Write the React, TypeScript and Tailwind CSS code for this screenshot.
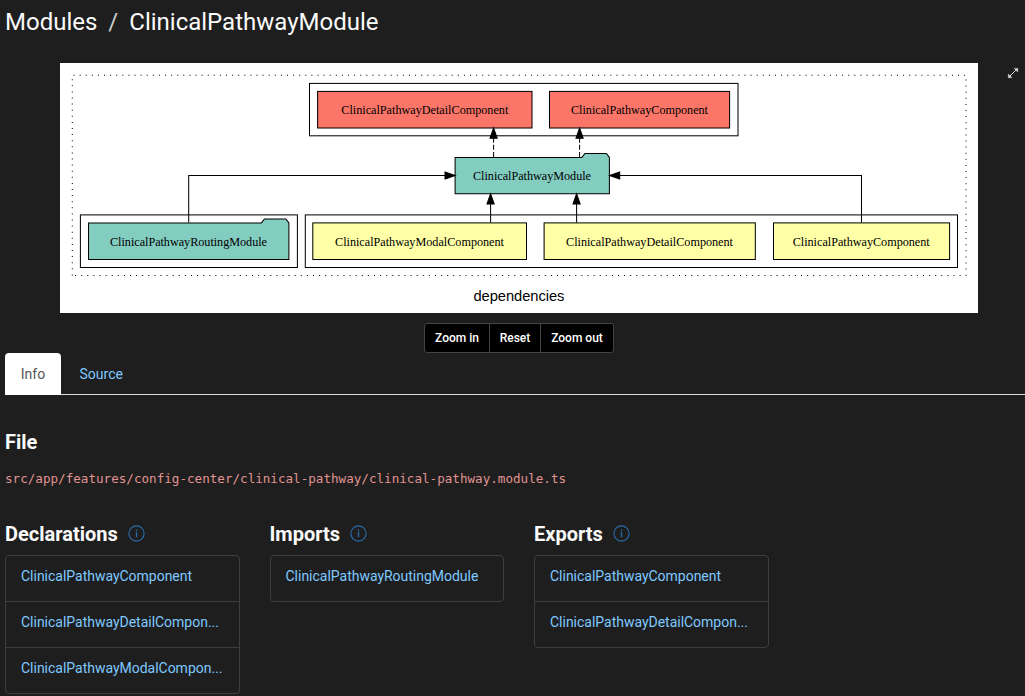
import React from 'react';

type Box = { x1: number; x2: number; y1: number; y2: number };

const clusters: Box[] = [
  { x1: 309.5, x2: 738, y1: 83.4, y2: 135.8 },
  { x1: 80.4, x2: 297.4, y1: 214.9, y2: 267.5 },
  { x1: 305.3, x2: 957.5, y1: 214.9, y2: 267.5 },
];

type Node = Box & { label: string; fill: string; tx: number; tw: number };

const nodes: Node[] = [
  { label: 'ClinicalPathwayDetailComponent', fill: '#fb7669', x1: 317.6, x2: 532, y1: 91.4, y2: 128, tx: 341.3, tw: 167 },
  { label: 'ClinicalPathwayComponent', fill: '#fb7669', x1: 549.5, x2: 729.6, y1: 91.4, y2: 128, tx: 571, tw: 137 },
  { label: 'ClinicalPathwayModalComponent', fill: '#ffffa8', x1: 312.8, x2: 526.5, y1: 222.9, y2: 259.5, tx: 335, tw: 169 },
  { label: 'ClinicalPathwayDetailComponent', fill: '#ffffa8', x1: 544.1, x2: 755.3, y1: 222.9, y2: 259.5, tx: 566, tw: 167 },
  { label: 'ClinicalPathwayComponent', fill: '#ffffa8', x1: 773.5, x2: 949.6, y1: 222.9, y2: 259.5, tx: 792.7, tw: 137 },
];

const folders: Node[] = [
  { label: 'ClinicalPathwayModule', fill: '#82cdc0', x1: 455.1, x2: 609.4, y1: 157.4, y2: 193.7, tx: 473, tw: 118 },
  { label: 'ClinicalPathwayRoutingModule', fill: '#82cdc0', x1: 88.5, x2: 288.9, y1: 222.9, y2: 259.5, tx: 110, tw: 157 },
];

function Label({ n }: { n: Node }) {
  return (
    <text x={n.tx} y={n.y1 + 22.8} textLength={n.tw} stroke="none" fill="#000" fontSize="12.2" className="font-['Liberation_Serif',serif]">
      {n.label}
    </text>
  );
}

function Graph() {
  return (
    <svg viewBox="60 63 918 250" width="918" height="250" className="block bg-white" stroke="#000" strokeWidth="1.02" fill="none">
      <path d="M72.3 275.4V75.3H966V275.4Z" strokeDasharray="1.02 5.08" />
      {clusters.map((c) => (
        <rect key={c.x1} x={c.x1} y={c.y1} width={c.x2 - c.x1} height={c.y2 - c.y1} />
      ))}
      {nodes.map((n) => (
        <g key={n.x1}>
          <rect x={n.x1} y={n.y1} width={n.x2 - n.x1} height={n.y2 - n.y1} fill={n.fill} />
          <Label n={n} />
        </g>
      ))}
      {folders.map((n) => (
        <g key={n.x1}>
          <path
            fill={n.fill}
            d={`M${n.x2} ${n.y1}L${n.x2 - 3} ${n.y1 - 4}H${n.x2 - 24.5}L${n.x2 - 27.5} ${n.y1}H${n.x1}V${n.y2}H${n.x2}Z`}
          />
          <Label n={n} />
        </g>
      ))}
      <path d="M188.7 222.5V175.5H445M861.5 222.5V175.5H620M490.6 222.5V204M576.6 222.5V204" />
      <path d="M493.6 157V138M579.6 157V138" strokeDasharray="5.1 2.04" />
      <g fill="#000">
        <path d="M445 171.9L455.2 175.5L445 179.1ZM619.7 171.9L609.5 175.5L619.7 179.1Z" />
        <path d="M487 204L490.6 193.8L494.2 204ZM573 204L576.6 193.8L580.2 204Z" />
        <path d="M490 138.2L493.6 128L497.2 138.2ZM576 138.2L579.6 128L583.2 138.2Z" />
      </g>
      <text x="473.4" y="301" textLength="91" stroke="none" fill="#000" fontSize="14.7" className="font-['Liberation_Sans',sans-serif]">
        dependencies
      </text>
    </svg>
  );
}

function InfoIcon() {
  return (
    <svg width="17" height="17" viewBox="0 0 17 17" fill="none" stroke="#2a6cab" strokeWidth="1.1" className="relative -top-[0.5px]">
      <circle cx="8.5" cy="8.5" r="7.6" />
      <path d="M8.5 7V12.2M8.5 4.5V5.9" strokeWidth="1.3" />
    </svg>
  );
}

function Column({ title, items }: { title: string; items: string[] }) {
  return (
    <section className="w-[234.5px] shrink-0">
      <h3 className="flex h-[22px] items-center gap-[9.8px] text-[20px] font-bold leading-[22px] text-[#fafafa]">
        {title}
        <InfoIcon />
      </h3>
      <ul className="mt-[10px] rounded-[4px] border border-[#3e3e3e]">
        {items.map((item) => (
          <li key={item} className="h-[46px] border-b border-[#3e3e3e] px-[15px] pt-[10px] last:h-[45px] last:border-b-0">
            <a className="block whitespace-nowrap text-[14px] leading-5 tracking-[-0.015px] text-[#7fc9ff]">{item}</a>
          </li>
        ))}
      </ul>
    </section>
  );
}

export default function App() {
  return (
    <div className="h-[696px] w-[1025px] overflow-hidden bg-[#1e1e1e] font-[Roboto,sans-serif] text-[#fafafa]">
      <h1 className="flex h-[63px] items-start gap-[11px] pl-[5px] pt-[5px] text-[24px] leading-[34px]">
        <span>Modules</span>
        <span className="text-[#ccc]">/</span>
        <span>ClinicalPathwayModule</span>
      </h1>
      <div className="flex pl-[60px]">
        <Graph />
        <svg width="12" height="12" viewBox="0 0 12 12" className="ml-[29px] mt-[4px]" stroke="#dcdcdc" strokeWidth="1" fill="none">
          <path d="M2 10L10.2 1.8" />
          <path d="M7.2 1.4H10.8V5ZM1.3 7V10.7H5Z" fill="#dcdcdc" strokeWidth="0.4" />
        </svg>
      </div>
      <div className="mt-[10px] flex justify-center pl-[13px]">
        <div className="flex h-[30px] divide-x divide-[#444] overflow-hidden rounded-[3px] border border-[#444] bg-black text-[12px] font-medium leading-[28px] text-white">
          <button className="w-[65px]">Zoom in</button>
          <button className="w-[51px]">Reset</button>
          <button className="w-[72px]">Zoom out</button>
        </div>
      </div>
      <div className="ml-[5px] flex h-[42px] border-b border-[#ddd] text-[14px] leading-[42px]">
        <a className="h-[42px] w-[56px] rounded-t-[4px] bg-white text-center text-[#555]">Info</a>
        <a className="ml-[18.5px] text-[#7fc9ff]">Source</a>
      </div>
      <h3 className="ml-[5px] mt-[36px] text-[20px] font-bold leading-[22px]">File</h3>
      <p className="ml-[5px] mt-[16px] font-['DejaVu_Sans_Mono',monospace] text-[12.6px] leading-[20px] text-[#e09393]">
        src/app/features/config-center/clinical-pathway/clinical-pathway.module.ts
      </p>
      <div className="ml-[5px] mt-[34px] flex gap-[30px]">
        <Column title="Declarations" items={['ClinicalPathwayComponent', 'ClinicalPathwayDetailCompon...', 'ClinicalPathwayModalCompon...']} />
        <Column title="Imports" items={['ClinicalPathwayRoutingModule']} />
        <Column title="Exports" items={['ClinicalPathwayComponent', 'ClinicalPathwayDetailCompon...']} />
      </div>
    </div>
  );
}
